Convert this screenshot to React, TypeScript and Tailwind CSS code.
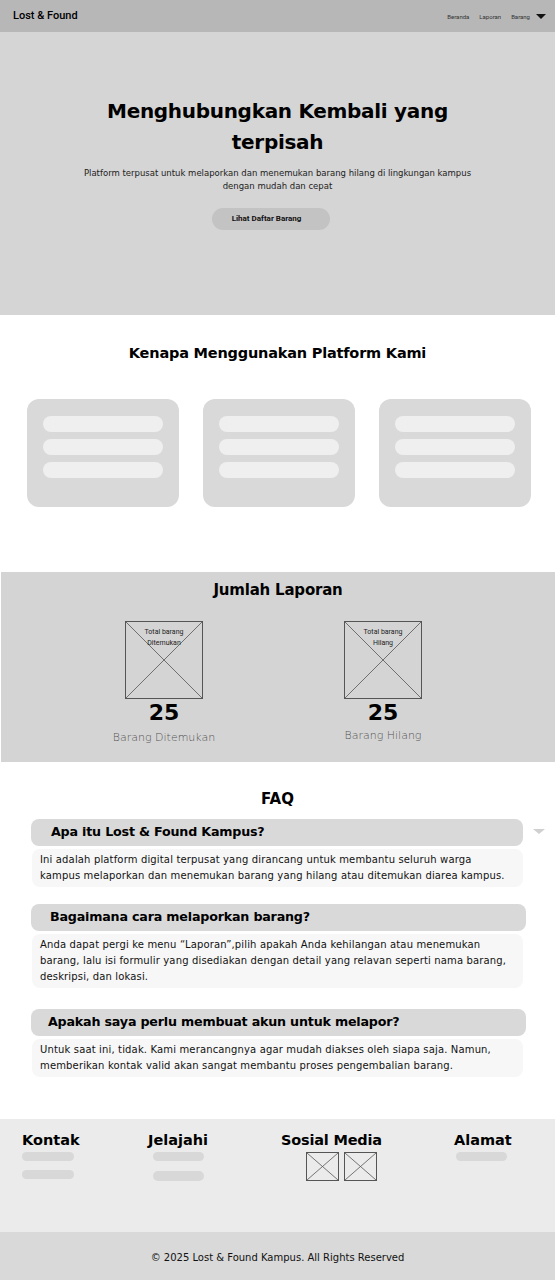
const faqs = [
  {
    q: "Apa itu Lost & Found Kampus?",
    a: "Ini adalah platform digital terpusat yang dirancang untuk membantu seluruh warga kampus melaporkan dan menemukan barang yang hilang atau ditemukan diarea kampus.",
  },
  {
    q: "Bagaimana cara melaporkan barang?",
    a: "Anda dapat pergi ke menu \u201cLaporan\u201d,pilih apakah Anda kehilangan atau menemukan barang, lalu isi formulir yang disediakan dengan detail yang relavan seperti  nama barang, deskripsi, dan lokasi.",
  },
  {
    q: "Apakah saya perlu membuat akun untuk melapor?",
    a: "Untuk saat ini, tidak. Kami merancangnya agar mudah diakses oleh siapa saja. Namun, memberikan kontak valid akan sangat membantu proses pengembalian barang.",
  },
];

function Placeholder({ className, label }: { className: string; label?: string }) {
  return (
    <div className={`relative border border-[#555] ${className}`}>
      <svg className="absolute inset-0 h-full w-full" viewBox="0 0 100 100" preserveAspectRatio="none">
        <line x1="0" y1="0" x2="100" y2="100" stroke="#555" strokeWidth="0.8" vectorEffect="non-scaling-stroke" />
        <line x1="100" y1="0" x2="0" y2="100" stroke="#555" strokeWidth="0.8" vectorEffect="non-scaling-stroke" />
      </svg>
      {label && (
        <p className="relative px-[16px] pt-[5px] text-center font-['Roboto',sans-serif] text-[7px] leading-[11px] text-[#222]">
          {label}
        </p>
      )}
    </div>
  );
}

function Card() {
  return (
    <div className="flex h-[108px] w-[152px] flex-col gap-[7px] rounded-xl bg-[#d9d9d9] px-4 pt-[17px]">
      <div className="h-4 rounded-full bg-[#f0efef]" />
      <div className="h-4 rounded-full bg-[#f0efef]" />
      <div className="h-4 rounded-full bg-[#f0efef]" />
    </div>
  );
}

export default function App() {
  return (
    <div className="w-[555px] font-['DejaVu_Sans',sans-serif] text-black">
      <header className="flex h-8 items-center justify-between bg-[#b7b7b7] pl-[13px] pr-[9px]">
        <span className="pt-[1px] font-['Roboto',sans-serif] text-[11px] font-medium">Lost &amp; Found</span>
        <nav className="flex items-center gap-[10px] font-['Roboto',sans-serif] text-[6px] text-[#333]">
          <span>Beranda</span>
          <span>Laporan</span>
          <span className="flex items-center gap-[6px]">
            Barang
            <svg width="10" height="5" viewBox="0 0 10 5">
              <path d="M0 0h10L5 5z" fill="#111" />
            </svg>
          </span>
        </nav>
      </header>

      <section className="flex h-[283px] flex-col items-center bg-[#d5d5d5] pt-[64px]">
        <h1 className="w-[360px] text-center text-[20px] leading-[31px] font-bold tracking-[-0.3px]">
          Menghubungkan Kembali yang terpisah
        </h1>
        <p className="mt-[9px] w-[400px] text-center text-[8.5px] leading-[13px] text-[#222]">
          Platform terpusat untuk melaporkan dan menemukan barang hilang di lingkungan kampus dengan mudah dan cepat
        </p>
        <button className="mt-[15px] mr-[14px] h-[22px] w-[118px] rounded-full bg-[#c4c3c4] pr-[8px] font-['Roboto',sans-serif] text-[8px] font-bold text-[#111]">
          Lihat Daftar Barang
        </button>
      </section>

      <section className="h-[257px] bg-white pt-[28px]">
        <h2 className="text-center text-[14.5px] font-bold tracking-[-0.2px]">Kenapa Menggunakan Platform Kami</h2>
        <div className="mt-[34px] flex justify-between pl-[27px] pr-[24px]">
          <Card />
          <Card />
          <Card />
        </div>
      </section>

      <section className="h-[190px] border-l border-white bg-[#d4d4d4] pt-[7px]">
        <h2 className="text-center text-[15px] font-bold tracking-[-0.2px]">Jumlah Laporan</h2>
        <div className="mt-[19px] flex pl-[110px]">
          <div className="flex w-[106px] flex-col items-center">
            <Placeholder className="h-[78px] w-[78px]" label="Total barang Ditemukan" />
            <span className="mt-[1px] text-[22px] leading-[26px] font-bold">25</span>
            <span className="mt-[4px] text-[11px] font-light text-[#555]">Barang Ditemukan</span>
          </div>
          <div className="ml-[127px] flex w-[78px] flex-col items-center">
            <Placeholder className="h-[78px] w-[78px]" label="Total barang Hilang" />
            <span className="mt-[1px] text-[22px] leading-[26px] font-bold">25</span>
            <span className="mt-[2px] text-[11px] font-light text-[#555]">Barang Hilang</span>
          </div>
        </div>
      </section>

      <section className="h-[357px] bg-white pt-[26px]">
        <h2 className="text-center text-[15px] font-bold">FAQ</h2>
        <div className="mt-[8px] flex flex-col">
          {faqs.map((f, i) => (
            <div key={f.q} className={i === 0 ? "relative" : i === 1 ? "mt-[17px]" : "mt-[21px]"}>
              <div className={`ml-[31px] flex h-[27px] items-center rounded-lg bg-[#d9d9d9] ${i === 0 ? "mr-[32px] pl-5" : i === 1 ? "mr-[29px] pl-[19px]" : "mr-[29px] pl-[17px]"}`}>
                <span className="text-[12.7px] font-bold tracking-[-0.2px]">{f.q}</span>
              </div>
              {i === 0 && (
                <svg className="absolute top-[10px] right-[10px]" width="12" height="6" viewBox="0 0 12 6">
                  <path d="M0 0h12L6 5z" fill="#d0d0d0" />
                </svg>
              )}
              <div className="mx-[32px] mt-[3px] rounded-lg bg-[#f7f7f7] px-[8px] py-[3px]">
                <p className="text-[10px] leading-[16px] tracking-[0.15px] text-[#111]">{f.a}</p>
              </div>
            </div>
          ))}
        </div>
      </section>

      <footer className="h-[113px] bg-[#ebebeb] pt-[11px]">
        <div className="flex px-[22px]">
          <div className="w-[126px]">
            <h3 className="text-[14.5px] font-bold leading-[20px]">Kontak</h3>
            <div className="mt-[2px] h-[9px] w-[52px] rounded-full bg-[#d8d8d8]" />
            <div className="mt-[9px] h-[9px] w-[52px] rounded-full bg-[#d8d8d8]" />
          </div>
          <div className="w-[133px]">
            <h3 className="text-[14.5px] font-bold leading-[20px]">Jelajahi</h3>
            <div className="mt-[2px] ml-[5px] h-[9px] w-[51px] rounded-full bg-[#d8d8d8]" />
            <div className="mt-[10px] ml-[5px] h-[10px] w-[51px] rounded-full bg-[#d8d8d8]" />
          </div>
          <div className="w-[173px]">
            <h3 className="text-[14.5px] font-bold leading-[20px] tracking-[-0.2px]">Sosial Media</h3>
            <div className="mt-[2px] ml-[25px] flex gap-[5px]">
              <Placeholder className="h-[29px] w-[33px]" />
              <Placeholder className="h-[29px] w-[33px]" />
            </div>
          </div>
          <div>
            <h3 className="text-[14.5px] font-bold leading-[20px]">Alamat</h3>
            <div className="mt-[2px] ml-[2px] h-[9px] w-[51px] rounded-full bg-[#d8d8d8]" />
          </div>
        </div>
      </footer>
      <div className="flex h-12 items-center justify-center bg-[#d9d9d9] pt-[3px] text-[10px] text-[#111]">
        © 2025 Lost &amp; Found Kampus. All Rights Reserved
      </div>
    </div>
  );
}
